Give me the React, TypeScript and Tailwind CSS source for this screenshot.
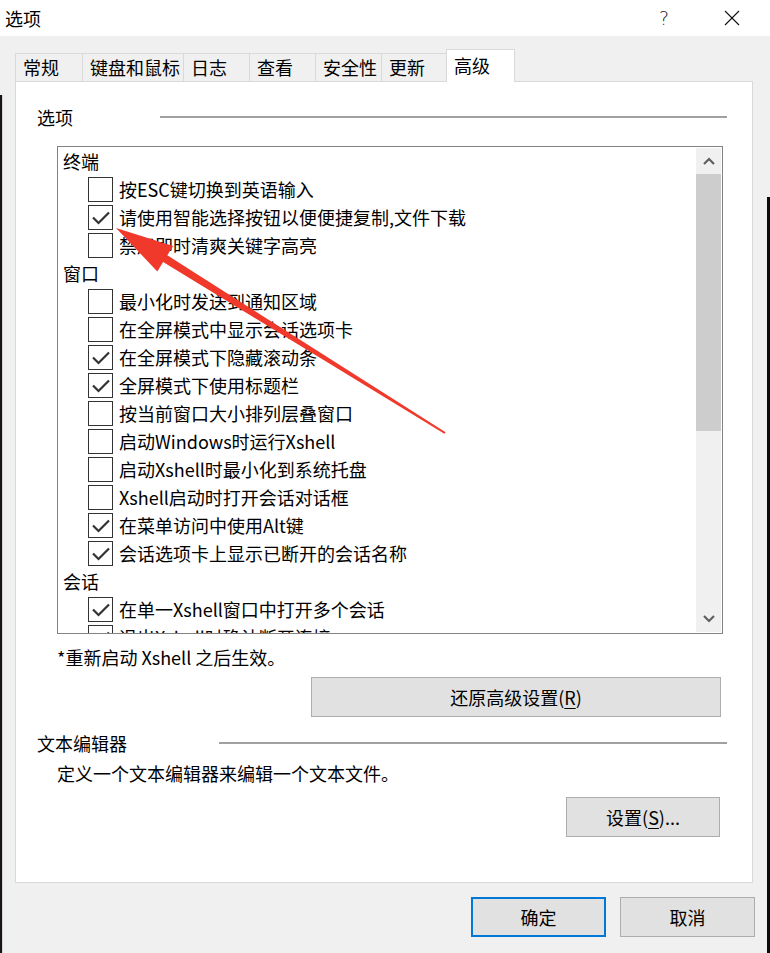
import React from "react";

type Row = { g: true; label: string } | { g?: false; label: string; checked: boolean };

const rows: Row[] = [
  { g: true, label: "终端" },
  { label: "按ESC键切换到英语输入", checked: false },
  { label: "请使用智能选择按钮以便便捷复制,文件下载", checked: true },
  { label: "禁用即时清爽关键字高亮", checked: false },
  { g: true, label: "窗口" },
  { label: "最小化时发送到通知区域", checked: false },
  { label: "在全屏模式中显示会话选项卡", checked: false },
  { label: "在全屏模式下隐藏滚动条", checked: true },
  { label: "全屏模式下使用标题栏", checked: true },
  { label: "按当前窗口大小排列层叠窗口", checked: false },
  { label: "启动Windows时运行Xshell", checked: false },
  { label: "启动Xshell时最小化到系统托盘", checked: false },
  { label: "Xshell启动时打开会话对话框", checked: false },
  { label: "在菜单访问中使用Alt键", checked: true },
  { label: "会话选项卡上显示已断开的会话名称", checked: true },
  { g: true, label: "会话" },
  { label: "在单一Xshell窗口中打开多个会话", checked: true },
  { label: "退出Xshell时确认断开连接", checked: true },
];

const tabs = [
  { label: "常规", w: "w-[67px]" },
  { label: "键盘和鼠标", w: "w-[101px]" },
  { label: "日志", w: "w-[66px]" },
  { label: "查看", w: "w-[66px]" },
  { label: "安全性", w: "w-[66px]" },
  { label: "更新", w: "w-[65px]" },
];

function Check({ checked }: { checked: boolean }) {
  return (
    <div className="w-[25px] h-[25px] border border-[#333333] bg-white shrink-0">
      {checked && (
        <svg width="23" height="23" viewBox="0 0 23 23">
          <polyline points="4,11.5 9.5,17 20,6.5" fill="none" stroke="#333333" strokeWidth="2.2" />
        </svg>
      )}
    </div>
  );
}

export default function App() {
  return (
    <div className="relative w-[770px] h-[953px] flex flex-col bg-[#f0f0f0] text-black font-['Noto_Sans_CJK_SC','Noto_Sans',sans-serif] overflow-hidden">
      {/* title bar */}
      <div className="h-[36px] bg-white flex items-center shrink-0">
        <div className="pl-[5px] text-[18px] leading-[24px]">选项</div>
        <div className="flex-1" />
        <div className="w-[20px] text-center text-[19px] leading-[24px] font-['DejaVu_Sans',sans-serif] font-extralight text-[#222] mr-[50px]">?</div>
        <svg width="16" height="16" viewBox="0 0 16 16" className="mr-[30px]">
          <line x1="1" y1="1" x2="15" y2="15" stroke="#111" strokeWidth="1.1" />
          <line x1="15" y1="1" x2="1" y2="15" stroke="#111" strokeWidth="1.1" />
        </svg>
      </div>
      <div className="flex-1 flex">
        {/* left strip */}
        <div className="w-[3px] flex flex-col">
          <div className="h-[59px] bg-[#f0f0f0]" />
          <div className="flex-1 bg-[#1a1512] border-r border-[#d6d6d6]" />
        </div>
        {/* main */}
        <div className="flex-1 flex flex-col pl-[12px] pr-[14px]">
          {/* tabs */}
          <div className="pt-[13px] flex items-end h-[45px]">
            {tabs.map((t) => (
              <div
                key={t.label}
                className={`${t.w} h-[28px] border-t border-l border-[#d9d9d9] pl-[7px] text-[18px] leading-[27px] whitespace-nowrap`}
              >
                {t.label}
              </div>
            ))}
            <div className="w-[69px] h-[33px] bg-white border-t border-l border-r border-[#d9d9d9] -mb-px relative z-10 pl-[7px] text-[18px] leading-[30px]">
              高级
            </div>
          </div>
          {/* panel */}
          <div className="h-[802px] bg-white border border-[#d9d9d9] flex flex-col pl-[21px] pr-[25px] pt-[23px]">
            <div className="flex items-center h-[24px]">
              <div className="w-[123px] text-[18px] leading-[24px]">选项</div>
              <div className="flex-1 h-[2px] bg-[#a0a0a0]" />
            </div>
            <div className="mt-[17px] ml-[20px] w-[666px] h-[488px] border border-[#828282] flex">
              <div className="flex-1 overflow-hidden">
                {rows.map((r, i) =>
                  r.g ? (
                    <div key={i} className="h-[28px] flex items-center pl-[5px] text-[18px] leading-[24px]">
                      {r.label}
                    </div>
                  ) : (
                    <div key={i} className="h-[28px] flex items-center pl-[30px]">
                      <Check checked={r.checked} />
                      <span className="ml-[6px] text-[18px] leading-[24px] whitespace-nowrap">{r.label}</span>
                    </div>
                  )
                )}
              </div>
              <div className="w-[25px] my-px mr-px bg-[#f0f0f0] flex flex-col">
                <div className="h-[26px] flex items-center justify-center">
                  <svg width="12" height="8" viewBox="0 0 12 8">
                    <polyline points="1,7 6,2 11,7" fill="none" stroke="#606060" strokeWidth="2.2" />
                  </svg>
                </div>
                <div className="h-[257px] bg-[#cdcdcd]" />
                <div className="flex-1" />
                <div className="h-[26px] flex items-center justify-center">
                  <svg width="12" height="8" viewBox="0 0 12 8">
                    <polyline points="1,1 6,6 11,1" fill="none" stroke="#606060" strokeWidth="2.2" />
                  </svg>
                </div>
              </div>
            </div>
            <div className="mt-[11px] ml-[20px] h-[24px] text-[18px] leading-[24px] whitespace-nowrap">*重新启动 Xshell 之后生效。</div>
            <div className="mt-[8px] flex justify-end pr-[6px]">
              <div className="w-[410px] h-[40px] bg-[#e1e1e1] border border-[#adadad] flex items-center justify-center text-[18px] leading-[24px]">
                还原高级设置(<span className="underline underline-offset-[3px]">R</span>)
              </div>
            </div>
            <div className="mt-[14px] flex items-center h-[24px]">
              <div className="w-[182px] text-[18px] leading-[24px]">文本编辑器</div>
              <div className="flex-1 h-[2px] bg-[#a0a0a0]" />
            </div>
            <div className="mt-[6px] ml-[20px] h-[24px] text-[18px] leading-[24px] whitespace-nowrap">定义一个文本编辑器来编辑一个文本文件。</div>
            <div className="mt-[12px] flex justify-end pr-[7px]">
              <div className="w-[154px] h-[40px] bg-[#e1e1e1] border border-[#adadad] flex items-center justify-center text-[18px] leading-[24px]">
                设置(<span className="underline underline-offset-[3px]">S</span>)...
              </div>
            </div>
          </div>
          {/* bottom buttons */}
          <div className="mt-[14px] flex justify-end gap-[14px] -mr-[2px]">
            <div className="w-[135px] h-[40px] bg-[#e1e1e1] border-2 border-[#0078d7] flex items-center justify-center text-[18px] leading-[24px]">确定</div>
            <div className="w-[135px] h-[40px] bg-[#e1e1e1] border border-[#adadad] flex items-center justify-center text-[18px] leading-[24px]">取消</div>
          </div>
        </div>
        {/* right strip */}
        <div className="w-[3px] flex flex-col">
          <div className="h-[161px] bg-[#f0f0f0]" />
          <div className="flex-1 bg-[#0a0a0a]" />
        </div>
      </div>
      {/* red annotation arrow */}
      <svg className="absolute left-0 top-0 pointer-events-none" width="770" height="953" viewBox="0 0 770 953">
        <polygon
          points="116,228 173.1,246 167.3,255.3 445.6,432.3 444.4,433.7 163.1,262.1 157.3,271.4"
          fill="#f0392b"
        />
      </svg>
    </div>
  );
}
